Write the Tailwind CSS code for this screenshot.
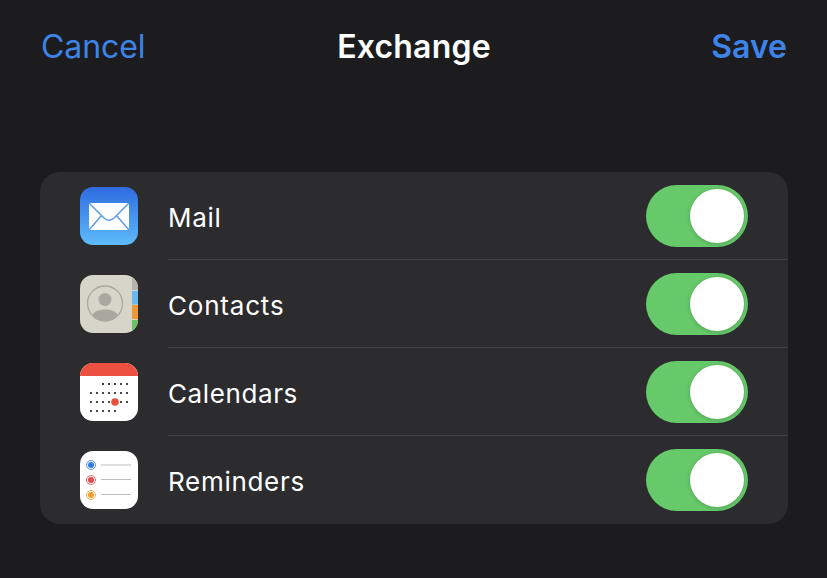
<!DOCTYPE html>
<html>
<head>
<meta charset="utf-8">
<script src="https://cdn.jsdelivr.net/npm/@tailwindcss/browser@4"></script>
</head>
<body class="bg-[#1c1c1e]">
<div class="w-[827px] h-[578px] overflow-hidden bg-[#1c1c1e] font-['Inter',sans-serif]">

  <!-- nav -->
  <div class="h-[172px] pl-[41px] pr-[40px] pt-[27px]">
    <div class="grid grid-cols-3 items-center h-[40px] text-[32px] leading-[40px]">
      <span class="text-[#3e84e8] tracking-[-0.1px]">Cancel</span>
      <span class="text-white font-semibold text-center tracking-[0.2px]">Exchange</span>
      <span class="text-[#3e84e8] font-semibold text-right">Save</span>
    </div>
  </div>

  <!-- list -->
  <div class="mx-[40px] w-[748px] h-[352px] rounded-[20px] bg-[#2c2c2e] overflow-hidden">

    <div class="flex h-[88px] pl-[40px]">
      <svg class="mt-[15px] shrink-0" width="58" height="58" viewBox="0 0 58 58">
        <defs><linearGradient id="mailbg" x1="0" y1="0" x2="0" y2="1"><stop offset="0" stop-color="#2f6be0"/><stop offset="1" stop-color="#5ebcfb"/></linearGradient></defs>
        <rect width="58" height="58" rx="13" fill="url(#mailbg)"/>
        <rect x="9" y="16" width="40" height="27" rx="1" fill="#fff"/>
        <path d="M9 16 L24 31 Q29 35.500 34 31 L49 16 M9 43 L21.500 28.500 M49 43 L36.500 28.500" fill="none" stroke="#5f9be6" stroke-width="1.500"/>
      </svg>
      <div class="ml-[30px] flex-1 flex items-center justify-between pr-[40px] border-b border-[#444446]">
        <span class="text-white text-[26px] tracking-[0.7px] pt-[3px]">Mail</span>
        <div class="relative w-[102px] h-[62px] rounded-full bg-[#66ca6a]"><div class="absolute top-[4px] right-[4px] w-[54px] h-[54px] rounded-full bg-white shadow-[0_1px_5px_rgba(0,0,0,0.2)]"></div></div>
      </div>
    </div>

    <div class="flex h-[88px] pl-[40px]">
      <svg class="mt-[15px] shrink-0" width="58" height="58" viewBox="0 0 58 58">
        <defs><clipPath id="cclip"><rect width="58" height="58" rx="13"/></clipPath></defs>
        <g clip-path="url(#cclip)">
          <rect width="58" height="58" fill="#d6d5ca"/>
          <rect x="52" y="0" width="6" height="15" fill="#b5b4ac"/>
          <rect x="52" y="16" width="6" height="13.500" fill="#6cb7ee"/>
          <rect x="52" y="30" width="6" height="14" fill="#ec9a38"/>
          <rect x="52" y="45" width="6" height="13" fill="#6cc267"/>
          <circle cx="25" cy="28.500" r="17.500" fill="none" stroke="#a9a79f" stroke-width="1.300"/>
          <circle cx="25" cy="24.500" r="6.500" fill="#a9a79f"/>
          <path d="M12 40.500 C14 36 20 34.500 25 34.500 C30 34.500 36 36 38 40.500 C34.500 44.500 30 46 25 46 C20 46 15.500 44.500 12 40.500 Z" fill="#a9a79f"/>
        </g>
      </svg>
      <div class="ml-[30px] flex-1 flex items-center justify-between pr-[40px] border-b border-[#444446]">
        <span class="text-white text-[26px] tracking-[0.8px] pt-[3px]">Contacts</span>
        <div class="relative w-[102px] h-[62px] rounded-full bg-[#66ca6a]"><div class="absolute top-[4px] right-[4px] w-[54px] h-[54px] rounded-full bg-white shadow-[0_1px_5px_rgba(0,0,0,0.2)]"></div></div>
      </div>
    </div>

    <div class="flex h-[88px] pl-[40px]">
      <svg class="mt-[15px] shrink-0" width="58" height="58" viewBox="0 0 58 58">
        <defs><clipPath id="calclip"><rect width="58" height="58" rx="13"/></clipPath></defs>
        <g clip-path="url(#calclip)">
          <rect width="58" height="58" fill="#fff"/>
          <rect width="58" height="13" fill="#ec5040"/>
          <g fill="#1c1c1e">
            <circle cx="23" cy="21" r="1.100"/><circle cx="29" cy="21" r="1.100"/><circle cx="35" cy="21" r="1.100"/><circle cx="41" cy="21" r="1.100"/><circle cx="47" cy="21" r="1.100"/>
            <circle cx="11" cy="30" r="1.100"/><circle cx="17" cy="30" r="1.100"/><circle cx="23" cy="30" r="1.100"/><circle cx="29" cy="30" r="1.100"/><circle cx="35" cy="30" r="1.100"/><circle cx="41" cy="30" r="1.100"/><circle cx="47" cy="30" r="1.100"/>
            <circle cx="11" cy="39" r="1.100"/><circle cx="17" cy="39" r="1.100"/><circle cx="23" cy="39" r="1.100"/><circle cx="29" cy="39" r="1.100"/><circle cx="41" cy="39" r="1.100"/><circle cx="47" cy="39" r="1.100"/>
            <circle cx="11" cy="48" r="1.100"/><circle cx="17" cy="48" r="1.100"/><circle cx="23" cy="48" r="1.100"/><circle cx="29" cy="48" r="1.100"/><circle cx="35" cy="48" r="1.100"/>
          </g>
          <circle cx="35" cy="39" r="3.800" fill="#e8503f"/>
        </g>
      </svg>
      <div class="ml-[30px] flex-1 flex items-center justify-between pr-[40px] border-b border-[#444446]">
        <span class="text-white text-[26px] tracking-[0.6px] pt-[3px]">Calendars</span>
        <div class="relative w-[102px] h-[62px] rounded-full bg-[#66ca6a]"><div class="absolute top-[4px] right-[4px] w-[54px] h-[54px] rounded-full bg-white shadow-[0_1px_5px_rgba(0,0,0,0.2)]"></div></div>
      </div>
    </div>

    <div class="flex h-[88px] pl-[40px]">
      <svg class="mt-[15px] shrink-0" width="58" height="58" viewBox="0 0 58 58">
        <rect width="58" height="58" rx="13" fill="#fff"/>
        <circle cx="11" cy="14" r="3" fill="#3478e5"/><circle cx="11" cy="14" r="4.500" fill="none" stroke="#3478e5" stroke-width=".8"/>
        <circle cx="11" cy="29" r="3" fill="#e5484d"/><circle cx="11" cy="29" r="4.500" fill="none" stroke="#e5484d" stroke-width=".8"/>
        <circle cx="11" cy="44" r="3" fill="#f0a030"/><circle cx="11" cy="44" r="4.500" fill="none" stroke="#f0a030" stroke-width=".8"/>
        <path d="M21 14 H51 M21 28.500 H51 M21 43.500 H51" stroke="#bdbdbd" stroke-width="1"/>
      </svg>
      <div class="ml-[30px] flex-1 flex items-center justify-between pr-[40px]">
        <span class="text-white text-[26px] tracking-[0.7px] pt-[3px]">Reminders</span>
        <div class="relative w-[102px] h-[62px] rounded-full bg-[#66ca6a]"><div class="absolute top-[4px] right-[4px] w-[54px] h-[54px] rounded-full bg-white shadow-[0_1px_5px_rgba(0,0,0,0.2)]"></div></div>
      </div>
    </div>

  </div>
</div>
</body>
</html>
